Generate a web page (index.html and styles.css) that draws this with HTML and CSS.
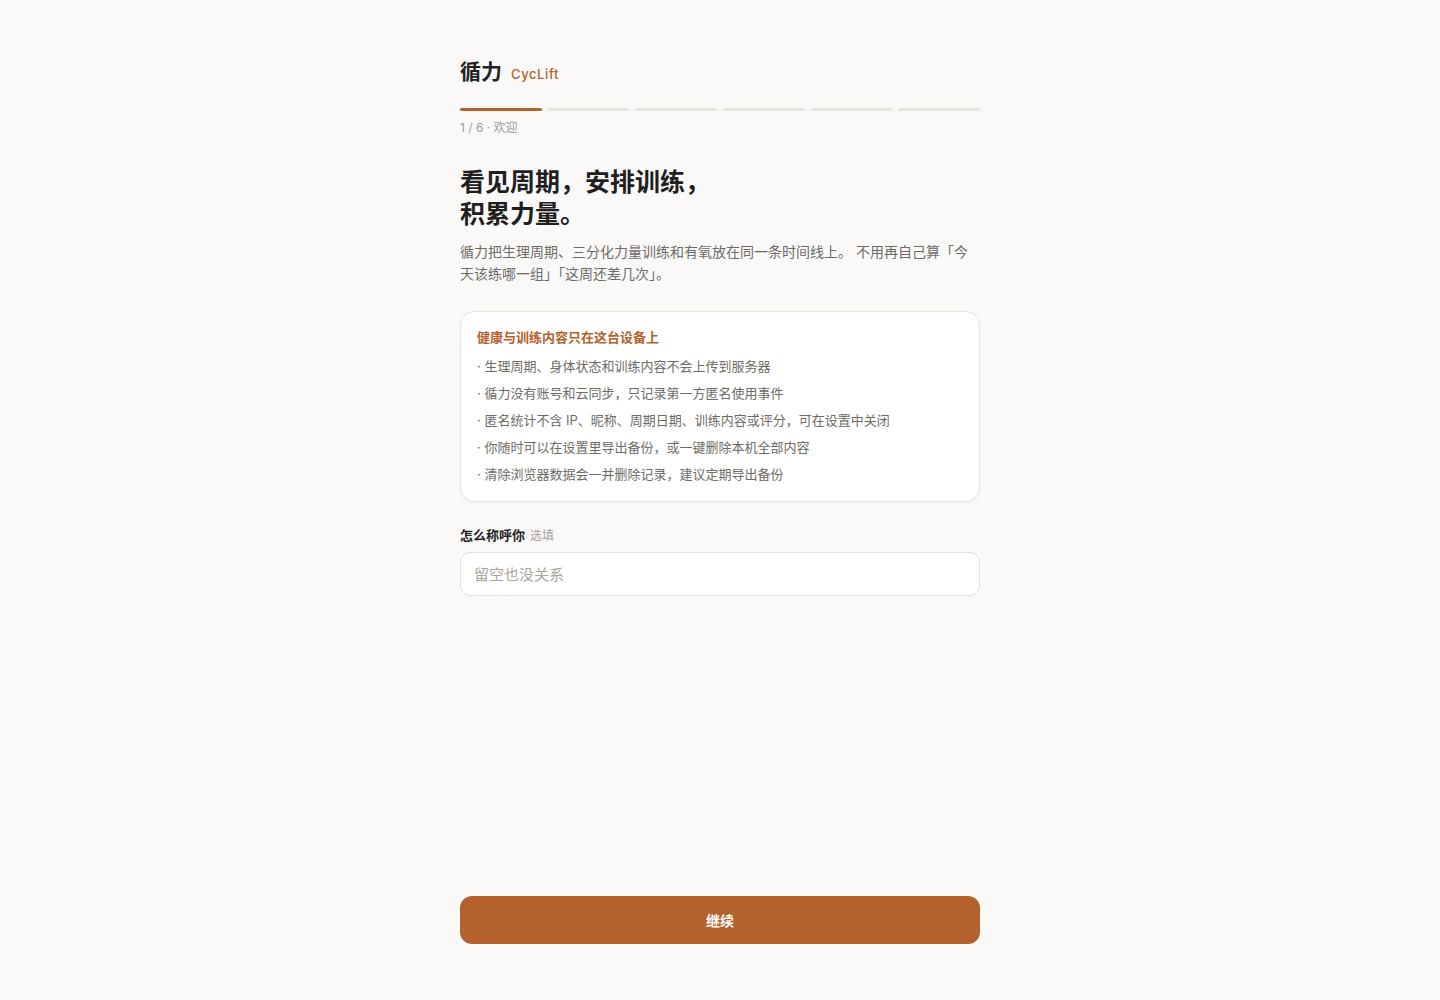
FILE: index.html
```html
<!DOCTYPE html>
<html lang="zh-CN">
<head>
<meta charset="utf-8">
<title>循力 CycLift</title>
<link rel="stylesheet" href="styles.css">
</head>
<body>
<div class="page">
  <main class="content">
    <header class="brand">
      <span class="brand-name">循力</span>
      <span class="brand-en">CycLift</span>
    </header>
    <div class="progress">
      <span class="seg active"></span>
      <span class="seg"></span>
      <span class="seg"></span>
      <span class="seg"></span>
      <span class="seg"></span>
      <span class="seg"></span>
    </div>
    <div class="step">1 / 6 · 欢迎</div>
    <h1 class="title">看见周期，安排训练，<br>积累力量。</h1>
    <p class="intro">循力把生理周期、三分化力量训练和有氧放在同一条时间线上。 不用再自己算「今天该练哪一组」「这周还差几次」。</p>
    <section class="card">
      <h2 class="card-title">健康与训练内容只在这台设备上</h2>
      <ul class="card-list">
        <li>· 生理周期、身体状态和训练内容不会上传到服务器</li>
        <li>· 循力没有账号和云同步，只记录第一方匿名使用事件</li>
        <li>· 匿名统计不含 IP、昵称、周期日期、训练内容或评分，可在设置中关闭</li>
        <li>· 你随时可以在设置里导出备份，或一键删除本机全部内容</li>
        <li>· 清除浏览器数据会一并删除记录，建议定期导出备份</li>
      </ul>
    </section>
    <label class="field-label" for="nick">怎么称呼你 <span class="optional">选填</span></label>
    <input class="field-input" id="nick" type="text" placeholder="留空也没关系">
  </main>
  <footer class="actions">
    <button class="primary" type="button">继续</button>
  </footer>
</div>
</body>
</html>
```
FILE: styles.css
```css
* { box-sizing: border-box; }
html, body { margin: 0; padding: 0; }
body {
  background: #faf9f7;
  color: #222;
  font-family: "Inter", "Noto Sans CJK SC", sans-serif;
}
.page {
  width: 520px;
  margin: 0 auto;
  min-height: 1000px;
  display: flex;
  flex-direction: column;
  padding: 58px 0 56px;
}
.content { flex: 1; display: flex; flex-direction: column; }
.brand { display: flex; align-items: baseline; gap: 9px; height: 28px; }
.brand-name { font-size: 21px; font-weight: 700; color: #222; line-height: 28px; }
.brand-en { font-size: 13px; color: #b5612e; letter-spacing: 0.6px; font-weight: 500; }
.progress { display: flex; gap: 6px; margin-top: 22px; }
.seg { flex: 1; height: 3px; border-radius: 2px; background: #e8e3dd; }
.seg.active { background: #b5612e; }
.step { margin-top: 8px; font-size: 12px; color: #9c9995; line-height: 18px; }
.title {
  margin: 29px 0 0;
  font-size: 25px;
  font-weight: 700;
  line-height: 32px;
  color: #1f1f1f;
}
.intro {
  margin: 11px 0 0;
  font-size: 14px;
  line-height: 22px;
  color: #6e6b67;
}
.card {
  margin-top: 26px;
  background: #fff;
  border: 1px solid #e7e2db;
  border-radius: 14px;
  padding: 15px 16px 13px;
  box-shadow: 0 1px 3px rgba(0,0,0,0.04);
}
.card-title {
  margin: 0;
  font-size: 13px;
  font-weight: 700;
  color: #b5612e;
  line-height: 20px;
}
.card-list { list-style: none; margin: 6px 0 0; padding: 0; }
.card-list li { font-size: 13px; line-height: 27px; color: #6e6b67; }
.field-label {
  margin-top: 23px;
  font-size: 13px;
  font-weight: 700;
  color: #222;
  line-height: 20px;
}
.optional { font-weight: 400; color: #a5a29e; font-size: 12px; margin-left: 2px; }
.field-input {
  margin-top: 6px;
  height: 44px;
  width: 100%;
  border: 1px solid #e6e1da;
  border-radius: 10px;
  background: #fff;
  padding: 0 13px;
  font-family: inherit;
  font-size: 15px;
  color: #222;
  outline: none;
}
.field-input::placeholder { color: #aaa6a1; }
.actions { display: flex; }
.primary {
  width: 100%;
  height: 48px;
  border: none;
  border-radius: 12px;
  background: #b5612e;
  color: #fff;
  font-family: inherit;
  font-size: 14px;
  font-weight: 700;
  cursor: pointer;
}
```
